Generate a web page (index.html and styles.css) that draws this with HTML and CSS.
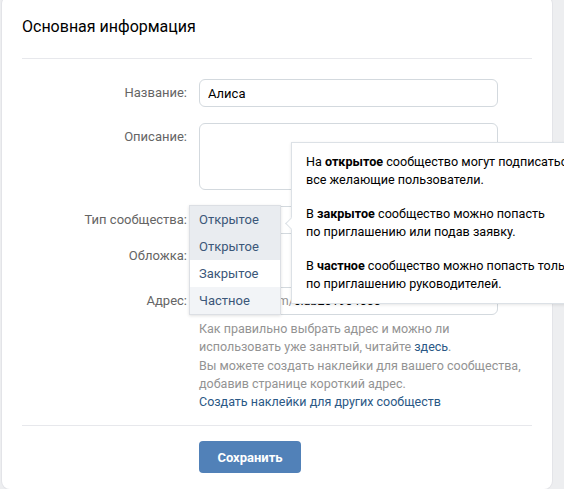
FILE: index.html
```html
<!DOCTYPE html>
<html lang="ru">
<head>
  <meta charset="UTF-8">
  <meta name="viewport" content="width=device-width, initial-scale=1.0">
  <title>Основная информация</title>
  <link rel="stylesheet" href="styles.css">
</head>
<body>
  <!-- Карточка настроек сообщества -->
  <div class="card">
    <div class="card-header">Основная информация</div>

    <div class="form">
      <div class="row row-name">
        <div class="label">Название:</div>
        <div class="field">
          <input class="input" type="text" value="Алиса">
        </div>
      </div>

      <div class="row row-desc">
        <div class="label">Описание:</div>
        <div class="field">
          <textarea class="textarea"></textarea>
        </div>
      </div>

      <div class="row row-type">
        <div class="label">Тип сообщества:</div>
        <div class="field">
          <div class="select">Открытое</div>

          <!-- Открытый список -->
          <div class="select-menu">
            <div class="select-item selected">Открытое</div>
            <div class="select-item hover">Открытое</div>
            <div class="select-item">Закрытое</div>
            <div class="select-item light">Частное</div>
          </div>

          <!-- Подсказка про типы -->
          <div class="tooltip">
            <p>На <b>открытое</b> сообщество могут подписаться<br>все желающие пользователи.</p>
            <p>В <b>закрытое</b> сообщество можно попасть<br>по приглашению или подав заявку.</p>
            <p>В <b>частное</b> сообщество можно попасть только<br>по приглашению руководителей.</p>
          </div>
        </div>
      </div>

      <div class="row row-cover">
        <div class="label">Обложка:</div>
        <div class="field"></div>
      </div>

      <div class="row row-address">
        <div class="label">Адрес:</div>
        <div class="field">
          <div class="input address"><span class="prefix">https://vk.com/</span>club201904000</div>
          <div class="hint">
            <p>Как правильно выбрать адрес и можно ли<br>использовать уже занятый, читайте <a href="#">здесь</a>.</p>
            <p>Вы можете создать наклейки для вашего сообщества,<br>добавив странице короткий адрес.<br><a href="#">Создать наклейки для других сообществ</a></p>
          </div>
        </div>
      </div>
    </div>

    <div class="card-footer">
      <button class="button">Сохранить</button>
    </div>
  </div>
</body>
</html>
```

FILE: styles.css
```css
html, body {
  overflow: hidden;
}
body {
  margin: 0;
  background: #edeef0;
  font-family: Roboto, "Open Sans", Arial, sans-serif;
  font-size: 13px;
  color: #000;
}
/* Карточка */
.card {
  position: relative;
  width: 550px;
  margin: -4px 0 0 2px;
  background: #fff;
  border-radius: 8px;
  box-shadow: 0 0 0 1px #e3e4e8;
}
.card-header {
  height: 62px;
  line-height: 62px;
  margin: 0 20px;
  border-bottom: 1px solid #e7e8ec;
  font-size: 16px;
}
.form {
  padding: 20px 20px 0;
}
.row {
  display: grid;
  grid-template-columns: 165px 299px;
  column-gap: 12px;
  margin-bottom: 16px;
}
.row-type {
  margin-bottom: 8px;
}
.row-cover {
  margin-bottom: 17px;
}
.row-address {
  margin-bottom: 0;
}
.label {
  padding-top: 5px;
  line-height: 18px;
  text-align: right;
  color: #656565;
}
.field {
  position: relative;
  min-height: 28px;
}
.input,
.textarea,
.select {
  display: block;
  box-sizing: border-box;
  width: 299px;
  height: 28px;
  margin: 0;
  padding: 0 8px;
  border: 1px solid #d3d9de;
  border-radius: 6px;
  background: #fff;
  font: 13px Roboto, "Open Sans", Arial, sans-serif;
  line-height: 26px;
  color: #000;
  outline: none;
}
.textarea {
  height: 67px;
  resize: none;
}
.address {
  white-space: nowrap;
  overflow: hidden;
  font-size: 12.5px;
}
.address .prefix {
  color: #939393;
}
/* Выпадающий список */
.select-menu {
  position: absolute;
  left: -10px;
  top: -1px;
  z-index: 2;
  width: 90px;
  background: #fff;
  border: 1px solid #dcdfe4;
  box-shadow: 0 1px 3px rgba(0, 0, 0, 0.12);
}
.select-item {
  height: 27px;
  line-height: 27px;
  padding-left: 9px;
  color: #3b5779;
}
.select-item.selected,
.select-item.hover {
  background: #e9ecf0;
}
.select-item.light {
  background: #f2f4f7;
}
/* Подсказка */
.tooltip {
  position: absolute;
  left: 92px;
  top: -64px;
  z-index: 3;
  width: 300px;
  padding: 10px 14px;
  background: #fff;
  border: 1px solid #dce1e6;
  box-shadow: 0 1px 3px rgba(0, 0, 0, 0.1);
  line-height: 18px;
  font-size: 12.6px;
}
.tooltip::before {
  content: "";
  position: absolute;
  left: -5px;
  top: 76px;
  width: 8px;
  height: 8px;
  background: #fff;
  border-left: 1px solid #dce1e6;
  border-bottom: 1px solid #dce1e6;
  transform: rotate(45deg);
}
.tooltip p {
  margin: 0 0 16px;
  white-space: nowrap;
}
.tooltip p:last-child {
  margin-bottom: 0;
}
.tooltip b {
  font-weight: 700;
}
/* Подписи под адресом */
.hint {
  margin-top: 5px;
  line-height: 18px;
  font-size: 12.5px;
  color: #939393;
  white-space: nowrap;
}
.hint p {
  margin: 0 0 1px;
}
.hint a {
  color: #2a5885;
  text-decoration: none;
}
/* Низ карточки */
.card-footer {
  margin: 13px 20px 0;
  padding: 15px 0 16px 177px;
  border-top: 1px solid #e7e8ec;
}
.button {
  width: 102px;
  height: 32px;
  padding: 0;
  border: none;
  border-radius: 4px;
  background: #5181b8;
  color: #fff;
  font: 700 13px Roboto, "Open Sans", Arial, sans-serif;
  cursor: pointer;
}
```
